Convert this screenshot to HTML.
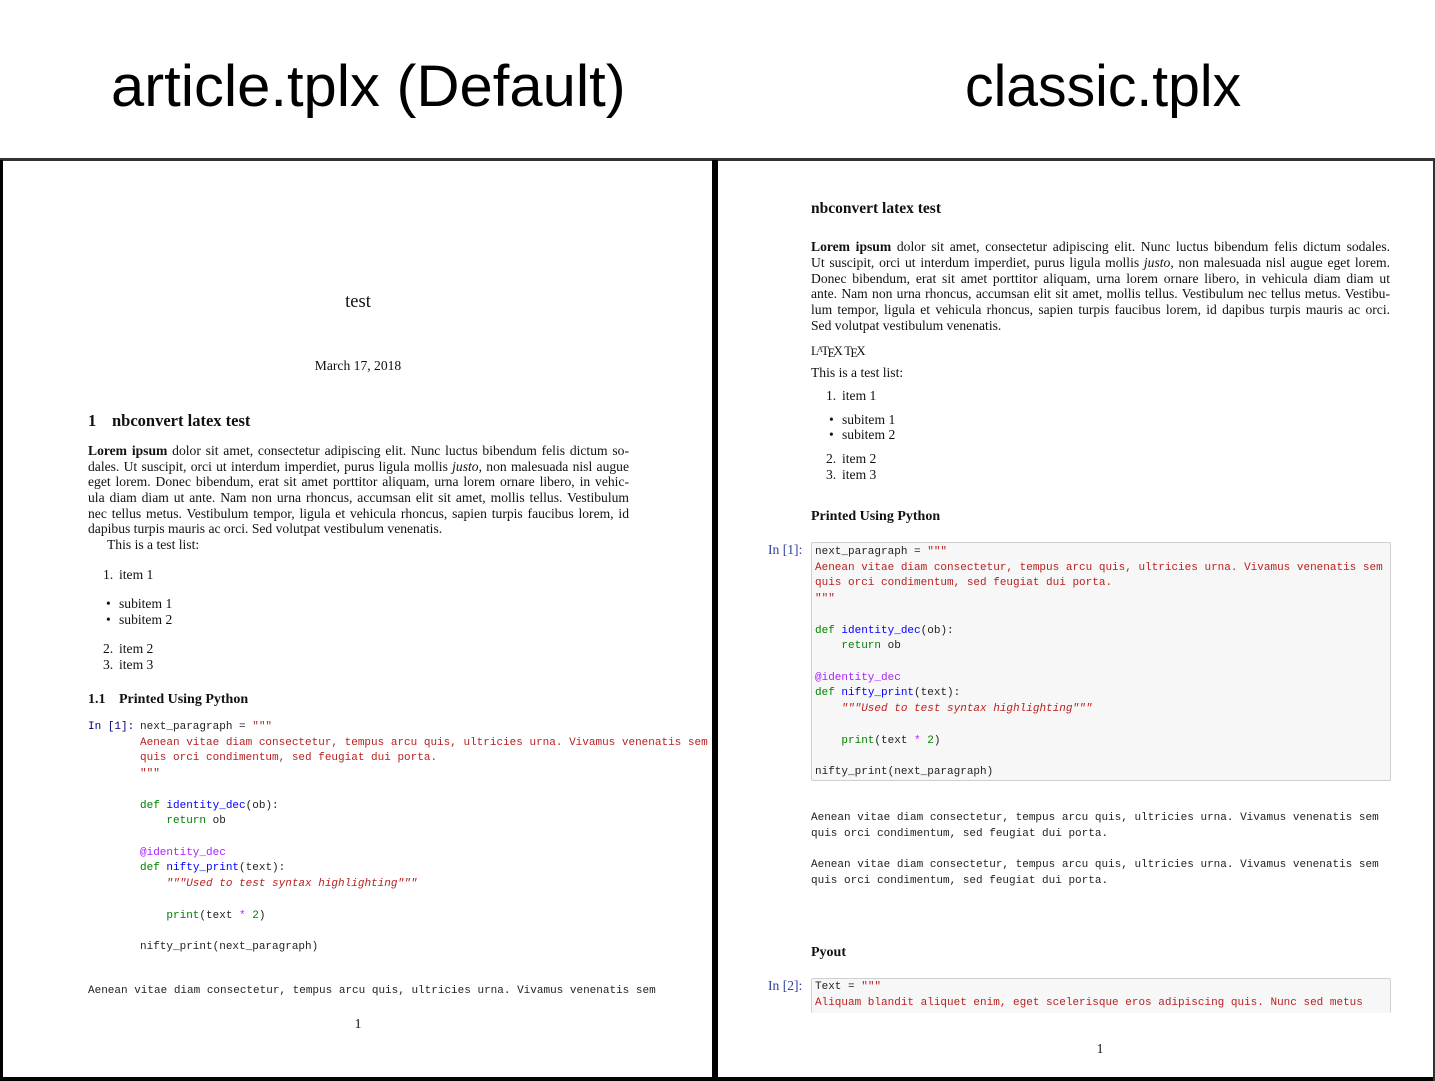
<!DOCTYPE html>
<html><head><meta charset="utf-8"><style>
*{margin:0;padding:0}
body{width:1435px;height:1081px;position:relative;background:#fff;overflow:hidden;font-family:"Liberation Serif",serif;color:#111}
.a{position:absolute;white-space:nowrap;line-height:16px}
.s{font-size:13.6px}
.j{position:absolute;font-size:13.6px;line-height:16px;text-align:justify;text-align-last:justify;white-space:nowrap}
.m{position:absolute;white-space:pre;font-family:"Liberation Mono",monospace;font-size:11px;line-height:15.72px;color:#222}
.k{color:#008000}.f{color:#0000ff}.r{color:#ba2121}.d{color:#aa22ff}.n{color:#000080}
.h{position:absolute;font-family:"Liberation Sans",sans-serif;font-size:58px;white-space:nowrap;transform-origin:left center;color:#000;line-height:60px}
</style></head><body>
<div class="h" style="left:111px;top:57px;transform:scaleX(1.03)">article.tplx (Default)</div>
<div class="h" style="left:965px;top:57px;transform:scaleX(0.985)">classic.tplx</div>
<div style="position:absolute;left:0;top:158px;width:1435px;height:3px;background:#333"></div>
<div style="position:absolute;left:0;top:160px;width:3px;height:921px;background:#000"></div>
<div style="position:absolute;left:712px;top:160px;width:6px;height:921px;background:#000"></div>
<div style="position:absolute;left:0;top:1077px;width:1435px;height:4px;background:#000"></div>
<div style="position:absolute;left:1433px;top:158px;width:2px;height:923px;background:#333"></div>

<!-- LEFT PAGE -->
<div class="a" style="left:0;width:716px;text-align:center;top:293px;font-size:18.5px;line-height:18px">test</div>
<div class="a s" style="left:0;width:716px;text-align:center;top:358px">March 17, 2018</div>
<div class="a" style="left:88px;top:412px;font-size:16.5px;font-weight:bold;line-height:18px">1</div>
<div class="a" style="left:112px;top:412px;font-size:16.5px;font-weight:bold;line-height:18px">nbconvert latex test</div>
<div class="j" style="left:88px;top:443px;width:541px"><b>Lorem ipsum</b> dolor sit amet, consectetur adipiscing elit. Nunc luctus bibendum felis dictum so-</div>
<div class="j" style="left:88px;top:459px;width:541px">dales. Ut suscipit, orci ut interdum imperdiet, purus ligula mollis <i>justo</i>, non malesuada nisl augue</div>
<div class="j" style="left:88px;top:474px;width:541px">eget lorem. Donec bibendum, erat sit amet porttitor aliquam, urna lorem ornare libero, in vehic-</div>
<div class="j" style="left:88px;top:490px;width:541px">ula diam diam ut ante. Nam non urna rhoncus, accumsan elit sit amet, mollis tellus. Vestibulum</div>
<div class="j" style="left:88px;top:506px;width:541px">nec tellus metus. Vestibulum tempor, ligula et vehicula rhoncus, sapien turpis faucibus lorem, id</div>
<div class="a s" style="left:88px;top:521px">dapibus turpis mauris ac orci. Sed volutpat vestibulum venenatis.</div>
<div class="a s" style="left:107px;top:537px">This is a test list:</div>
<div class="a s" style="left:103px;top:567px">1.</div><div class="a s" style="left:119px;top:567px">item 1</div>
<div class="a s" style="left:106px;top:596px">•</div><div class="a s" style="left:119px;top:596px">subitem 1</div>
<div class="a s" style="left:106px;top:612px">•</div><div class="a s" style="left:119px;top:612px">subitem 2</div>
<div class="a s" style="left:103px;top:641px">2.</div><div class="a s" style="left:119px;top:641px">item 2</div>
<div class="a s" style="left:103px;top:657px">3.</div><div class="a s" style="left:119px;top:657px">item 3</div>
<div class="a" style="left:88px;top:692px;font-size:14px;font-weight:bold">1.1</div>
<div class="a" style="left:119px;top:692px;font-size:14px;font-weight:bold">Printed Using Python</div>
<div class="m n" style="left:88px;top:720px">In [1]:</div>
<div class="m" style="left:140px;top:720px">next_paragraph = <span class="r">"""</span>
<span class="r">Aenean vitae diam consectetur, tempus arcu quis, ultricies urna. Vivamus venenatis sem</span>
<span class="r">quis orci condimentum, sed feugiat dui porta.</span>
<span class="r">"""</span>

<span class="k">def</span> <span class="f">identity_dec</span>(ob):
    <span class="k">return</span> ob

<span class="d">@identity_dec</span>
<span class="k">def</span> <span class="f">nifty_print</span>(text):
    <span class="r"><i>"""Used to test syntax highlighting"""</i></span>

    <span class="k">print</span>(text <span class="d">*</span> <span class="k">2</span>)

nifty_print(next_paragraph)</div>
<div class="m" style="left:88px;top:984px">Aenean vitae diam consectetur, tempus arcu quis, ultricies urna. Vivamus venenatis sem</div>
<div class="a s" style="left:0;width:716px;text-align:center;top:1016px">1</div>

<!-- RIGHT PAGE -->
<div class="a" style="left:811px;top:201px;font-size:15.5px;font-weight:bold">nbconvert latex test</div>
<div class="j" style="left:811px;top:239px;width:579px"><b>Lorem ipsum</b> dolor sit amet, consectetur adipiscing elit. Nunc luctus bibendum felis dictum sodales.</div>
<div class="j" style="left:811px;top:255px;width:579px">Ut suscipit, orci ut interdum imperdiet, purus ligula mollis <i>justo</i>, non malesuada nisl augue eget lorem.</div>
<div class="j" style="left:811px;top:271px;width:579px">Donec bibendum, erat sit amet porttitor aliquam, urna lorem ornare libero, in vehicula diam diam ut</div>
<div class="j" style="left:811px;top:286px;width:579px">ante. Nam non urna rhoncus, accumsan elit sit amet, mollis tellus. Vestibulum nec tellus metus. Vestibu-</div>
<div class="j" style="left:811px;top:302px;width:579px">lum tempor, ligula et vehicula rhoncus, sapien turpis faucibus lorem, id dapibus turpis mauris ac orci.</div>
<div class="a s" style="left:811px;top:318px">Sed volutpat vestibulum venenatis.</div>
<div class="a" style="left:811px;top:342px;font-size:12.5px;letter-spacing:-1.5px">L<span style="font-size:8px;vertical-align:3px">A</span>T<span style="vertical-align:-2px">E</span>X&nbsp; T<span style="vertical-align:-2px">E</span>X</div>
<div class="a s" style="left:811px;top:365px">This is a test list:</div>
<div class="a s" style="left:826px;top:388px">1.</div><div class="a s" style="left:842px;top:388px">item 1</div>
<div class="a s" style="left:829px;top:412px">•</div><div class="a s" style="left:842px;top:412px">subitem 1</div>
<div class="a s" style="left:829px;top:427px">•</div><div class="a s" style="left:842px;top:427px">subitem 2</div>
<div class="a s" style="left:826px;top:451px">2.</div><div class="a s" style="left:842px;top:451px">item 2</div>
<div class="a s" style="left:826px;top:467px">3.</div><div class="a s" style="left:842px;top:467px">item 3</div>
<div class="a" style="left:811px;top:509px;font-size:14px;font-weight:bold">Printed Using Python</div>
<div class="a s" style="left:768px;top:542px;color:#303f9f">In [1]:</div>
<div style="position:absolute;left:811px;top:542px;width:578px;height:237px;background:#f7f7f7;border:1px solid #cfcfcf;border-radius:2px"></div>
<div class="m" style="left:815px;top:545px">next_paragraph = <span class="r">"""</span>
<span class="r">Aenean vitae diam consectetur, tempus arcu quis, ultricies urna. Vivamus venenatis sem</span>
<span class="r">quis orci condimentum, sed feugiat dui porta.</span>
<span class="r">"""</span>

<span class="k">def</span> <span class="f">identity_dec</span>(ob):
    <span class="k">return</span> ob

<span class="d">@identity_dec</span>
<span class="k">def</span> <span class="f">nifty_print</span>(text):
    <span class="r"><i>"""Used to test syntax highlighting"""</i></span>

    <span class="k">print</span>(text <span class="d">*</span> <span class="k">2</span>)

nifty_print(next_paragraph)</div>
<div class="m" style="left:811px;top:811px">Aenean vitae diam consectetur, tempus arcu quis, ultricies urna. Vivamus venenatis sem
quis orci condimentum, sed feugiat dui porta.

Aenean vitae diam consectetur, tempus arcu quis, ultricies urna. Vivamus venenatis sem
quis orci condimentum, sed feugiat dui porta.</div>
<div class="a" style="left:811px;top:945px;font-size:14px;font-weight:bold">Pyout</div>
<div class="a s" style="left:768px;top:978px;color:#303f9f">In [2]:</div>
<div style="position:absolute;left:811px;top:978px;width:578px;height:34px;background:#f7f7f7;border:1px solid #cfcfcf;border-bottom:none;border-radius:2px"></div>
<div class="m" style="left:815px;top:980px">Text = <span class="r">"""</span>
<span class="r">Aliquam blandit aliquet enim, eget scelerisque eros adipiscing quis. Nunc sed metus</span></div>
<div class="a s" style="left:1000px;width:200px;text-align:center;top:1041px">1</div>
</body></html>
